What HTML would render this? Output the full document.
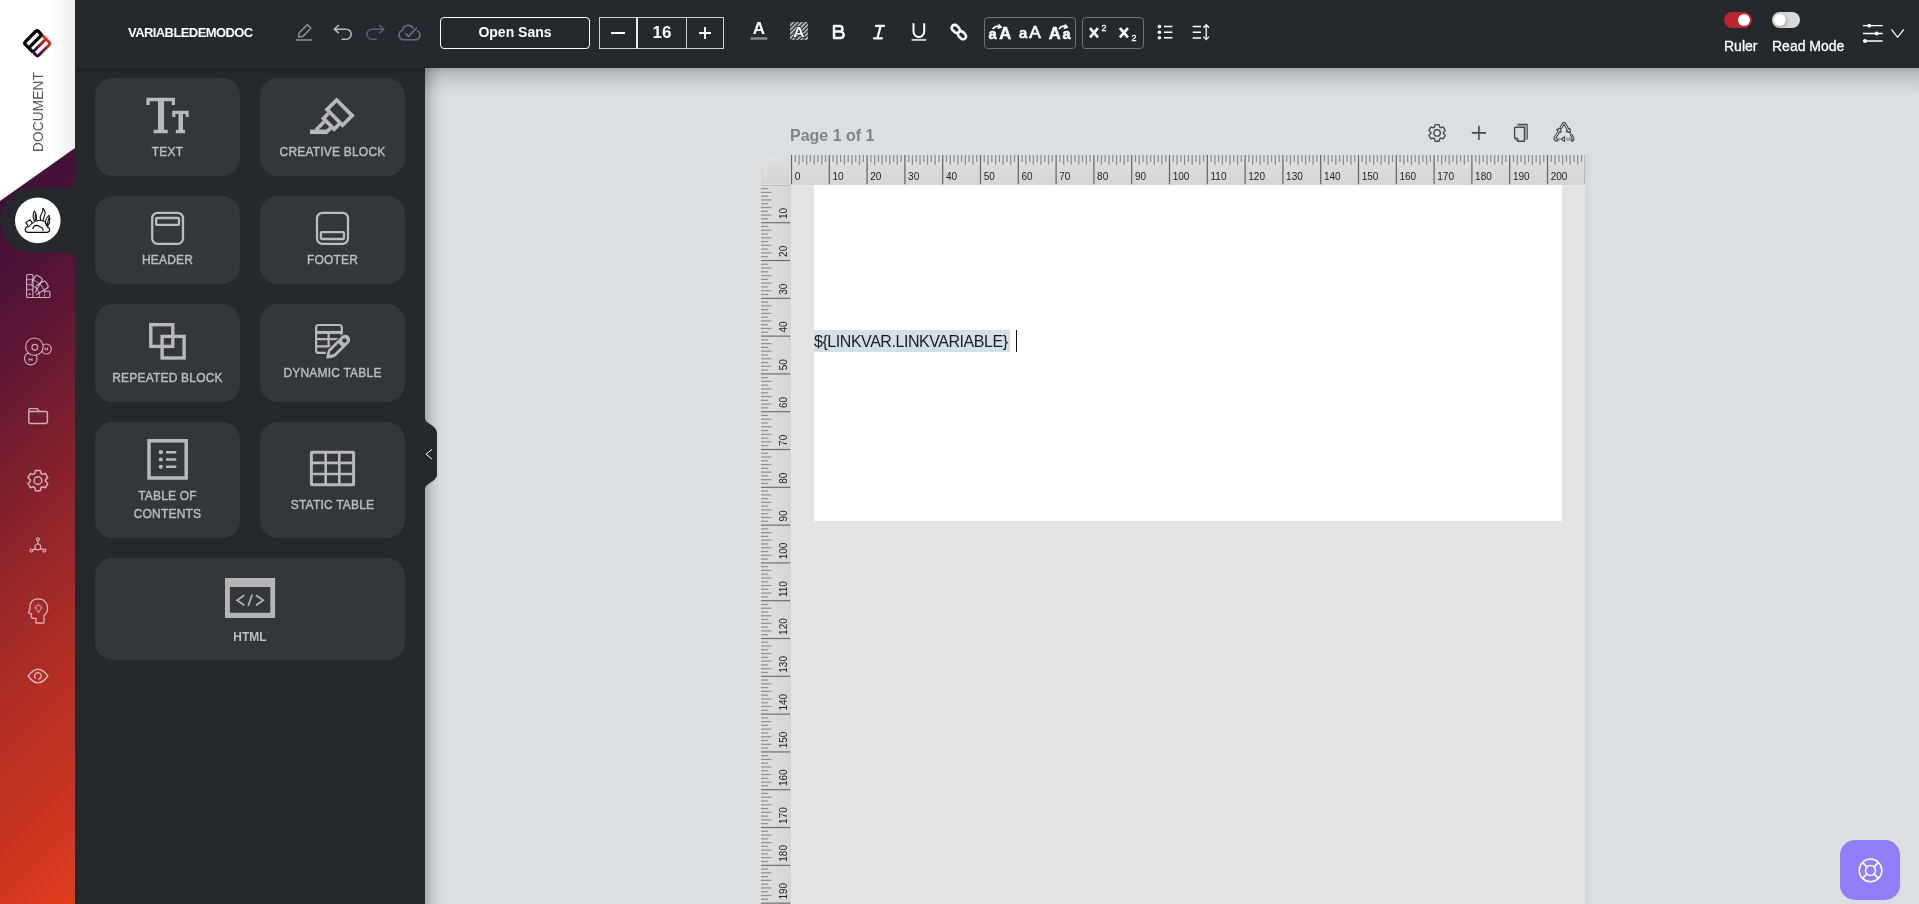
<!DOCTYPE html>
<html>
<head>
<meta charset="utf-8">
<title>Document Editor</title>
<style>
*{box-sizing:border-box;margin:0;padding:0}
html,body{width:1919px;height:904px;overflow:hidden;background:#dcdfe2;font-family:"Liberation Sans",sans-serif;}
.abs{position:absolute}
#canvas{left:425px;top:68px;width:1494px;height:836px;background:#dcdfe2}
#canvas-shadow{left:425px;top:68px;width:20px;height:836px;background:linear-gradient(90deg,rgba(0,0,0,.24),rgba(0,0,0,.09) 40%,rgba(0,0,0,.02) 75%,rgba(0,0,0,0))}
#canvas-topshadow{left:425px;top:68px;width:1494px;height:30px;background:linear-gradient(180deg,rgba(0,0,0,.23),rgba(0,0,0,.13) 25%,rgba(0,0,0,.06) 55%,rgba(0,0,0,.015) 82%,rgba(0,0,0,0))}
#panel{left:75px;top:0;width:350px;height:904px;background:#25282d}
#topbar{left:75px;top:0;width:1844px;height:68px;background:#25282d}
#panel-shadow{left:75px;top:68px;width:350px;height:8px;background:linear-gradient(180deg,rgba(0,0,0,.18),rgba(0,0,0,0))}
#side{left:0;top:0;width:75px;height:904px;background:linear-gradient(135deg,#380e3c 12.3%,#3f0f39 20.1%,#4f1336 30.3%,#5c1634 36.5%,#6b1a31 43.1%,#7b1f2e 49.7%,#8d232c 56.4%,#9b282a 63.0%,#a92b26 69.7%,#b62f24 76.3%,#bf3222 83.5%,#ce3620 90.6%,#d9391e 95.7%,#e03c1d 100.0%)}
.card{position:absolute;background:#33363b;border-radius:18px;color:#bdbdbd;font-size:12px;text-align:center;letter-spacing:.2px;-webkit-text-stroke:.4px #bdbdbd}
.card .lbl{position:absolute;left:0;right:0;text-align:center;line-height:18px}
.card svg{position:absolute}
.tb-txt{color:#fff;font-weight:bold}
.box{position:absolute;border:1px solid #fff;border-radius:4px}
.gbox{position:absolute;border:1px solid #6d7075;border-radius:4px}
#rulerh{left:791px;top:155px;width:794px;height:29.5px;background:linear-gradient(180deg,#e1e1e1,#d5d5d5)}
#rulerc{left:761px;top:155px;width:29px;height:29px;background:linear-gradient(180deg,#dedede,#d4d4d4)}
#rulerv{left:761px;top:185px;width:29.5px;height:719px;background:linear-gradient(90deg,#e0e0e0,#d5d5d5)}
#pagebg{left:791px;top:185px;width:794px;height:719px;background:#e4e4e4}
#page{left:814px;top:185px;width:748px;height:336px;background:#fff}
.rnum{position:absolute;font-size:11px;color:#333;line-height:11px}
</style>
</head>
<body>
<div id="wrap" style="position:absolute;left:0;top:0;width:1919px;height:904px;will-change:transform">
<div id="canvas" class="abs"></div>
<div id="canvas-topshadow" class="abs"></div>
<div id="canvas-shadow" class="abs"></div>

<!-- PAGE AREA -->
<div class="abs" style="left:790px;top:126px;font-size:16px;font-weight:bold;color:#808388;line-height:20px">Page 1 of 1</div>
<div class="abs" style="left:1585px;top:155px;width:7px;height:749px;background:linear-gradient(90deg,rgba(0,0,0,.04),rgba(0,0,0,0))"></div>
<div id="pagebg" class="abs"></div>
<div id="page" class="abs"></div>
<div id="rulerh" class="abs"></div>
<div id="rulerc" class="abs"></div>
<div id="rulerv" class="abs"></div>
<div class="abs" style="left:763px;top:157px;width:20px;height:4px;background:rgba(255,255,255,.13)"></div><div class="abs" style="left:763px;top:161px;width:4px;height:16px;background:rgba(255,255,255,.13)"></div>
<svg class="abs" style="left:0;top:0" width="1919" height="904" viewBox="0 0 1919 904">
<defs><clipPath id="hc"><rect x="791" y="155" width="794" height="29.5"/></clipPath><clipPath id="vc"><rect x="761" y="185" width="29.5" height="719"/></clipPath></defs>
<g clip-path="url(#hc)">
<rect x="790.90" y="155" width="1.2" height="29.5" fill="#636363"/>
<rect x="794.63" y="155" width="1.3" height="7" fill="#8f8f8f"/>
<rect x="798.41" y="155" width="1.3" height="9.7" fill="#8f8f8f"/>
<rect x="802.19" y="155" width="1.3" height="7" fill="#8f8f8f"/>
<rect x="805.97" y="155" width="1.3" height="9.7" fill="#8f8f8f"/>
<rect x="809.75" y="155" width="1.3" height="7" fill="#8f8f8f"/>
<rect x="813.53" y="155" width="1.3" height="9.7" fill="#8f8f8f"/>
<rect x="817.31" y="155" width="1.3" height="7" fill="#8f8f8f"/>
<rect x="821.09" y="155" width="1.3" height="9.7" fill="#8f8f8f"/>
<rect x="824.87" y="155" width="1.3" height="7" fill="#8f8f8f"/>
<rect x="828.70" y="155" width="1.2" height="29.5" fill="#636363"/>
<rect x="832.43" y="155" width="1.3" height="7" fill="#8f8f8f"/>
<rect x="836.21" y="155" width="1.3" height="9.7" fill="#8f8f8f"/>
<rect x="839.99" y="155" width="1.3" height="7" fill="#8f8f8f"/>
<rect x="843.77" y="155" width="1.3" height="9.7" fill="#8f8f8f"/>
<rect x="847.55" y="155" width="1.3" height="7" fill="#8f8f8f"/>
<rect x="851.33" y="155" width="1.3" height="9.7" fill="#8f8f8f"/>
<rect x="855.11" y="155" width="1.3" height="7" fill="#8f8f8f"/>
<rect x="858.89" y="155" width="1.3" height="9.7" fill="#8f8f8f"/>
<rect x="862.67" y="155" width="1.3" height="7" fill="#8f8f8f"/>
<rect x="866.50" y="155" width="1.2" height="29.5" fill="#636363"/>
<rect x="870.23" y="155" width="1.3" height="7" fill="#8f8f8f"/>
<rect x="874.01" y="155" width="1.3" height="9.7" fill="#8f8f8f"/>
<rect x="877.79" y="155" width="1.3" height="7" fill="#8f8f8f"/>
<rect x="881.57" y="155" width="1.3" height="9.7" fill="#8f8f8f"/>
<rect x="885.35" y="155" width="1.3" height="7" fill="#8f8f8f"/>
<rect x="889.13" y="155" width="1.3" height="9.7" fill="#8f8f8f"/>
<rect x="892.91" y="155" width="1.3" height="7" fill="#8f8f8f"/>
<rect x="896.69" y="155" width="1.3" height="9.7" fill="#8f8f8f"/>
<rect x="900.47" y="155" width="1.3" height="7" fill="#8f8f8f"/>
<rect x="904.30" y="155" width="1.2" height="29.5" fill="#636363"/>
<rect x="908.03" y="155" width="1.3" height="7" fill="#8f8f8f"/>
<rect x="911.81" y="155" width="1.3" height="9.7" fill="#8f8f8f"/>
<rect x="915.59" y="155" width="1.3" height="7" fill="#8f8f8f"/>
<rect x="919.37" y="155" width="1.3" height="9.7" fill="#8f8f8f"/>
<rect x="923.15" y="155" width="1.3" height="7" fill="#8f8f8f"/>
<rect x="926.93" y="155" width="1.3" height="9.7" fill="#8f8f8f"/>
<rect x="930.71" y="155" width="1.3" height="7" fill="#8f8f8f"/>
<rect x="934.49" y="155" width="1.3" height="9.7" fill="#8f8f8f"/>
<rect x="938.27" y="155" width="1.3" height="7" fill="#8f8f8f"/>
<rect x="942.10" y="155" width="1.2" height="29.5" fill="#636363"/>
<rect x="945.83" y="155" width="1.3" height="7" fill="#8f8f8f"/>
<rect x="949.61" y="155" width="1.3" height="9.7" fill="#8f8f8f"/>
<rect x="953.39" y="155" width="1.3" height="7" fill="#8f8f8f"/>
<rect x="957.17" y="155" width="1.3" height="9.7" fill="#8f8f8f"/>
<rect x="960.95" y="155" width="1.3" height="7" fill="#8f8f8f"/>
<rect x="964.73" y="155" width="1.3" height="9.7" fill="#8f8f8f"/>
<rect x="968.51" y="155" width="1.3" height="7" fill="#8f8f8f"/>
<rect x="972.29" y="155" width="1.3" height="9.7" fill="#8f8f8f"/>
<rect x="976.07" y="155" width="1.3" height="7" fill="#8f8f8f"/>
<rect x="979.90" y="155" width="1.2" height="29.5" fill="#636363"/>
<rect x="983.63" y="155" width="1.3" height="7" fill="#8f8f8f"/>
<rect x="987.41" y="155" width="1.3" height="9.7" fill="#8f8f8f"/>
<rect x="991.19" y="155" width="1.3" height="7" fill="#8f8f8f"/>
<rect x="994.97" y="155" width="1.3" height="9.7" fill="#8f8f8f"/>
<rect x="998.75" y="155" width="1.3" height="7" fill="#8f8f8f"/>
<rect x="1002.53" y="155" width="1.3" height="9.7" fill="#8f8f8f"/>
<rect x="1006.31" y="155" width="1.3" height="7" fill="#8f8f8f"/>
<rect x="1010.09" y="155" width="1.3" height="9.7" fill="#8f8f8f"/>
<rect x="1013.87" y="155" width="1.3" height="7" fill="#8f8f8f"/>
<rect x="1017.70" y="155" width="1.2" height="29.5" fill="#636363"/>
<rect x="1021.43" y="155" width="1.3" height="7" fill="#8f8f8f"/>
<rect x="1025.21" y="155" width="1.3" height="9.7" fill="#8f8f8f"/>
<rect x="1028.99" y="155" width="1.3" height="7" fill="#8f8f8f"/>
<rect x="1032.77" y="155" width="1.3" height="9.7" fill="#8f8f8f"/>
<rect x="1036.55" y="155" width="1.3" height="7" fill="#8f8f8f"/>
<rect x="1040.33" y="155" width="1.3" height="9.7" fill="#8f8f8f"/>
<rect x="1044.11" y="155" width="1.3" height="7" fill="#8f8f8f"/>
<rect x="1047.89" y="155" width="1.3" height="9.7" fill="#8f8f8f"/>
<rect x="1051.67" y="155" width="1.3" height="7" fill="#8f8f8f"/>
<rect x="1055.50" y="155" width="1.2" height="29.5" fill="#636363"/>
<rect x="1059.23" y="155" width="1.3" height="7" fill="#8f8f8f"/>
<rect x="1063.01" y="155" width="1.3" height="9.7" fill="#8f8f8f"/>
<rect x="1066.79" y="155" width="1.3" height="7" fill="#8f8f8f"/>
<rect x="1070.57" y="155" width="1.3" height="9.7" fill="#8f8f8f"/>
<rect x="1074.35" y="155" width="1.3" height="7" fill="#8f8f8f"/>
<rect x="1078.13" y="155" width="1.3" height="9.7" fill="#8f8f8f"/>
<rect x="1081.91" y="155" width="1.3" height="7" fill="#8f8f8f"/>
<rect x="1085.69" y="155" width="1.3" height="9.7" fill="#8f8f8f"/>
<rect x="1089.47" y="155" width="1.3" height="7" fill="#8f8f8f"/>
<rect x="1093.30" y="155" width="1.2" height="29.5" fill="#636363"/>
<rect x="1097.03" y="155" width="1.3" height="7" fill="#8f8f8f"/>
<rect x="1100.81" y="155" width="1.3" height="9.7" fill="#8f8f8f"/>
<rect x="1104.59" y="155" width="1.3" height="7" fill="#8f8f8f"/>
<rect x="1108.37" y="155" width="1.3" height="9.7" fill="#8f8f8f"/>
<rect x="1112.15" y="155" width="1.3" height="7" fill="#8f8f8f"/>
<rect x="1115.93" y="155" width="1.3" height="9.7" fill="#8f8f8f"/>
<rect x="1119.71" y="155" width="1.3" height="7" fill="#8f8f8f"/>
<rect x="1123.49" y="155" width="1.3" height="9.7" fill="#8f8f8f"/>
<rect x="1127.27" y="155" width="1.3" height="7" fill="#8f8f8f"/>
<rect x="1131.10" y="155" width="1.2" height="29.5" fill="#636363"/>
<rect x="1134.83" y="155" width="1.3" height="7" fill="#8f8f8f"/>
<rect x="1138.61" y="155" width="1.3" height="9.7" fill="#8f8f8f"/>
<rect x="1142.39" y="155" width="1.3" height="7" fill="#8f8f8f"/>
<rect x="1146.17" y="155" width="1.3" height="9.7" fill="#8f8f8f"/>
<rect x="1149.95" y="155" width="1.3" height="7" fill="#8f8f8f"/>
<rect x="1153.73" y="155" width="1.3" height="9.7" fill="#8f8f8f"/>
<rect x="1157.51" y="155" width="1.3" height="7" fill="#8f8f8f"/>
<rect x="1161.29" y="155" width="1.3" height="9.7" fill="#8f8f8f"/>
<rect x="1165.07" y="155" width="1.3" height="7" fill="#8f8f8f"/>
<rect x="1168.90" y="155" width="1.2" height="29.5" fill="#636363"/>
<rect x="1172.63" y="155" width="1.3" height="7" fill="#8f8f8f"/>
<rect x="1176.41" y="155" width="1.3" height="9.7" fill="#8f8f8f"/>
<rect x="1180.19" y="155" width="1.3" height="7" fill="#8f8f8f"/>
<rect x="1183.97" y="155" width="1.3" height="9.7" fill="#8f8f8f"/>
<rect x="1187.75" y="155" width="1.3" height="7" fill="#8f8f8f"/>
<rect x="1191.53" y="155" width="1.3" height="9.7" fill="#8f8f8f"/>
<rect x="1195.31" y="155" width="1.3" height="7" fill="#8f8f8f"/>
<rect x="1199.09" y="155" width="1.3" height="9.7" fill="#8f8f8f"/>
<rect x="1202.87" y="155" width="1.3" height="7" fill="#8f8f8f"/>
<rect x="1206.70" y="155" width="1.2" height="29.5" fill="#636363"/>
<rect x="1210.43" y="155" width="1.3" height="7" fill="#8f8f8f"/>
<rect x="1214.21" y="155" width="1.3" height="9.7" fill="#8f8f8f"/>
<rect x="1217.99" y="155" width="1.3" height="7" fill="#8f8f8f"/>
<rect x="1221.77" y="155" width="1.3" height="9.7" fill="#8f8f8f"/>
<rect x="1225.55" y="155" width="1.3" height="7" fill="#8f8f8f"/>
<rect x="1229.33" y="155" width="1.3" height="9.7" fill="#8f8f8f"/>
<rect x="1233.11" y="155" width="1.3" height="7" fill="#8f8f8f"/>
<rect x="1236.89" y="155" width="1.3" height="9.7" fill="#8f8f8f"/>
<rect x="1240.67" y="155" width="1.3" height="7" fill="#8f8f8f"/>
<rect x="1244.50" y="155" width="1.2" height="29.5" fill="#636363"/>
<rect x="1248.23" y="155" width="1.3" height="7" fill="#8f8f8f"/>
<rect x="1252.01" y="155" width="1.3" height="9.7" fill="#8f8f8f"/>
<rect x="1255.79" y="155" width="1.3" height="7" fill="#8f8f8f"/>
<rect x="1259.57" y="155" width="1.3" height="9.7" fill="#8f8f8f"/>
<rect x="1263.35" y="155" width="1.3" height="7" fill="#8f8f8f"/>
<rect x="1267.13" y="155" width="1.3" height="9.7" fill="#8f8f8f"/>
<rect x="1270.91" y="155" width="1.3" height="7" fill="#8f8f8f"/>
<rect x="1274.69" y="155" width="1.3" height="9.7" fill="#8f8f8f"/>
<rect x="1278.47" y="155" width="1.3" height="7" fill="#8f8f8f"/>
<rect x="1282.30" y="155" width="1.2" height="29.5" fill="#636363"/>
<rect x="1286.03" y="155" width="1.3" height="7" fill="#8f8f8f"/>
<rect x="1289.81" y="155" width="1.3" height="9.7" fill="#8f8f8f"/>
<rect x="1293.59" y="155" width="1.3" height="7" fill="#8f8f8f"/>
<rect x="1297.37" y="155" width="1.3" height="9.7" fill="#8f8f8f"/>
<rect x="1301.15" y="155" width="1.3" height="7" fill="#8f8f8f"/>
<rect x="1304.93" y="155" width="1.3" height="9.7" fill="#8f8f8f"/>
<rect x="1308.71" y="155" width="1.3" height="7" fill="#8f8f8f"/>
<rect x="1312.49" y="155" width="1.3" height="9.7" fill="#8f8f8f"/>
<rect x="1316.27" y="155" width="1.3" height="7" fill="#8f8f8f"/>
<rect x="1320.10" y="155" width="1.2" height="29.5" fill="#636363"/>
<rect x="1323.83" y="155" width="1.3" height="7" fill="#8f8f8f"/>
<rect x="1327.61" y="155" width="1.3" height="9.7" fill="#8f8f8f"/>
<rect x="1331.39" y="155" width="1.3" height="7" fill="#8f8f8f"/>
<rect x="1335.17" y="155" width="1.3" height="9.7" fill="#8f8f8f"/>
<rect x="1338.95" y="155" width="1.3" height="7" fill="#8f8f8f"/>
<rect x="1342.73" y="155" width="1.3" height="9.7" fill="#8f8f8f"/>
<rect x="1346.51" y="155" width="1.3" height="7" fill="#8f8f8f"/>
<rect x="1350.29" y="155" width="1.3" height="9.7" fill="#8f8f8f"/>
<rect x="1354.07" y="155" width="1.3" height="7" fill="#8f8f8f"/>
<rect x="1357.90" y="155" width="1.2" height="29.5" fill="#636363"/>
<rect x="1361.63" y="155" width="1.3" height="7" fill="#8f8f8f"/>
<rect x="1365.41" y="155" width="1.3" height="9.7" fill="#8f8f8f"/>
<rect x="1369.19" y="155" width="1.3" height="7" fill="#8f8f8f"/>
<rect x="1372.97" y="155" width="1.3" height="9.7" fill="#8f8f8f"/>
<rect x="1376.75" y="155" width="1.3" height="7" fill="#8f8f8f"/>
<rect x="1380.53" y="155" width="1.3" height="9.7" fill="#8f8f8f"/>
<rect x="1384.31" y="155" width="1.3" height="7" fill="#8f8f8f"/>
<rect x="1388.09" y="155" width="1.3" height="9.7" fill="#8f8f8f"/>
<rect x="1391.87" y="155" width="1.3" height="7" fill="#8f8f8f"/>
<rect x="1395.70" y="155" width="1.2" height="29.5" fill="#636363"/>
<rect x="1399.43" y="155" width="1.3" height="7" fill="#8f8f8f"/>
<rect x="1403.21" y="155" width="1.3" height="9.7" fill="#8f8f8f"/>
<rect x="1406.99" y="155" width="1.3" height="7" fill="#8f8f8f"/>
<rect x="1410.77" y="155" width="1.3" height="9.7" fill="#8f8f8f"/>
<rect x="1414.55" y="155" width="1.3" height="7" fill="#8f8f8f"/>
<rect x="1418.33" y="155" width="1.3" height="9.7" fill="#8f8f8f"/>
<rect x="1422.11" y="155" width="1.3" height="7" fill="#8f8f8f"/>
<rect x="1425.89" y="155" width="1.3" height="9.7" fill="#8f8f8f"/>
<rect x="1429.67" y="155" width="1.3" height="7" fill="#8f8f8f"/>
<rect x="1433.50" y="155" width="1.2" height="29.5" fill="#636363"/>
<rect x="1437.23" y="155" width="1.3" height="7" fill="#8f8f8f"/>
<rect x="1441.01" y="155" width="1.3" height="9.7" fill="#8f8f8f"/>
<rect x="1444.79" y="155" width="1.3" height="7" fill="#8f8f8f"/>
<rect x="1448.57" y="155" width="1.3" height="9.7" fill="#8f8f8f"/>
<rect x="1452.35" y="155" width="1.3" height="7" fill="#8f8f8f"/>
<rect x="1456.13" y="155" width="1.3" height="9.7" fill="#8f8f8f"/>
<rect x="1459.91" y="155" width="1.3" height="7" fill="#8f8f8f"/>
<rect x="1463.69" y="155" width="1.3" height="9.7" fill="#8f8f8f"/>
<rect x="1467.47" y="155" width="1.3" height="7" fill="#8f8f8f"/>
<rect x="1471.30" y="155" width="1.2" height="29.5" fill="#636363"/>
<rect x="1475.03" y="155" width="1.3" height="7" fill="#8f8f8f"/>
<rect x="1478.81" y="155" width="1.3" height="9.7" fill="#8f8f8f"/>
<rect x="1482.59" y="155" width="1.3" height="7" fill="#8f8f8f"/>
<rect x="1486.37" y="155" width="1.3" height="9.7" fill="#8f8f8f"/>
<rect x="1490.15" y="155" width="1.3" height="7" fill="#8f8f8f"/>
<rect x="1493.93" y="155" width="1.3" height="9.7" fill="#8f8f8f"/>
<rect x="1497.71" y="155" width="1.3" height="7" fill="#8f8f8f"/>
<rect x="1501.49" y="155" width="1.3" height="9.7" fill="#8f8f8f"/>
<rect x="1505.27" y="155" width="1.3" height="7" fill="#8f8f8f"/>
<rect x="1509.10" y="155" width="1.2" height="29.5" fill="#636363"/>
<rect x="1512.83" y="155" width="1.3" height="7" fill="#8f8f8f"/>
<rect x="1516.61" y="155" width="1.3" height="9.7" fill="#8f8f8f"/>
<rect x="1520.39" y="155" width="1.3" height="7" fill="#8f8f8f"/>
<rect x="1524.17" y="155" width="1.3" height="9.7" fill="#8f8f8f"/>
<rect x="1527.95" y="155" width="1.3" height="7" fill="#8f8f8f"/>
<rect x="1531.73" y="155" width="1.3" height="9.7" fill="#8f8f8f"/>
<rect x="1535.51" y="155" width="1.3" height="7" fill="#8f8f8f"/>
<rect x="1539.29" y="155" width="1.3" height="9.7" fill="#8f8f8f"/>
<rect x="1543.07" y="155" width="1.3" height="7" fill="#8f8f8f"/>
<rect x="1546.90" y="155" width="1.2" height="29.5" fill="#636363"/>
<rect x="1550.63" y="155" width="1.3" height="7" fill="#8f8f8f"/>
<rect x="1554.41" y="155" width="1.3" height="9.7" fill="#8f8f8f"/>
<rect x="1558.19" y="155" width="1.3" height="7" fill="#8f8f8f"/>
<rect x="1561.97" y="155" width="1.3" height="9.7" fill="#8f8f8f"/>
<rect x="1565.75" y="155" width="1.3" height="7" fill="#8f8f8f"/>
<rect x="1569.53" y="155" width="1.3" height="9.7" fill="#8f8f8f"/>
<rect x="1573.31" y="155" width="1.3" height="7" fill="#8f8f8f"/>
<rect x="1577.09" y="155" width="1.3" height="9.7" fill="#8f8f8f"/>
<rect x="1580.87" y="155" width="1.3" height="7" fill="#8f8f8f"/>
<rect x="1584.70" y="155" width="1.2" height="29.5" fill="#636363"/>
<rect x="1588.43" y="155" width="1.3" height="7" fill="#8f8f8f"/>
<text x="794.70" y="180" font-family="Liberation Sans, sans-serif" font-size="10" fill="#222">0</text>
<text x="832.50" y="180" font-family="Liberation Sans, sans-serif" font-size="10" fill="#222">10</text>
<text x="870.30" y="180" font-family="Liberation Sans, sans-serif" font-size="10" fill="#222">20</text>
<text x="908.10" y="180" font-family="Liberation Sans, sans-serif" font-size="10" fill="#222">30</text>
<text x="945.90" y="180" font-family="Liberation Sans, sans-serif" font-size="10" fill="#222">40</text>
<text x="983.70" y="180" font-family="Liberation Sans, sans-serif" font-size="10" fill="#222">50</text>
<text x="1021.50" y="180" font-family="Liberation Sans, sans-serif" font-size="10" fill="#222">60</text>
<text x="1059.30" y="180" font-family="Liberation Sans, sans-serif" font-size="10" fill="#222">70</text>
<text x="1097.10" y="180" font-family="Liberation Sans, sans-serif" font-size="10" fill="#222">80</text>
<text x="1134.90" y="180" font-family="Liberation Sans, sans-serif" font-size="10" fill="#222">90</text>
<text x="1172.70" y="180" font-family="Liberation Sans, sans-serif" font-size="10" fill="#222">100</text>
<text x="1210.50" y="180" font-family="Liberation Sans, sans-serif" font-size="10" fill="#222">110</text>
<text x="1248.30" y="180" font-family="Liberation Sans, sans-serif" font-size="10" fill="#222">120</text>
<text x="1286.10" y="180" font-family="Liberation Sans, sans-serif" font-size="10" fill="#222">130</text>
<text x="1323.90" y="180" font-family="Liberation Sans, sans-serif" font-size="10" fill="#222">140</text>
<text x="1361.70" y="180" font-family="Liberation Sans, sans-serif" font-size="10" fill="#222">150</text>
<text x="1399.50" y="180" font-family="Liberation Sans, sans-serif" font-size="10" fill="#222">160</text>
<text x="1437.30" y="180" font-family="Liberation Sans, sans-serif" font-size="10" fill="#222">170</text>
<text x="1475.10" y="180" font-family="Liberation Sans, sans-serif" font-size="10" fill="#222">180</text>
<text x="1512.90" y="180" font-family="Liberation Sans, sans-serif" font-size="10" fill="#222">190</text>
<text x="1550.70" y="180" font-family="Liberation Sans, sans-serif" font-size="10" fill="#222">200</text>
</g>
<g clip-path="url(#vc)">
<rect x="761" y="184.35" width="29.5" height="1.15" fill="#9a9a9a"/>
<rect x="761" y="188.03" width="7.2" height="1.2" fill="#909090"/>
<rect x="761" y="191.81" width="10.3" height="1.2" fill="#909090"/>
<rect x="761" y="195.59" width="7.2" height="1.2" fill="#909090"/>
<rect x="761" y="199.37" width="10.3" height="1.2" fill="#909090"/>
<rect x="761" y="203.15" width="7.2" height="1.2" fill="#909090"/>
<rect x="761" y="206.93" width="10.3" height="1.2" fill="#909090"/>
<rect x="761" y="210.71" width="7.2" height="1.2" fill="#909090"/>
<rect x="761" y="214.49" width="10.3" height="1.2" fill="#909090"/>
<rect x="761" y="218.27" width="7.2" height="1.2" fill="#909090"/>
<rect x="761" y="222.15" width="29.5" height="1.15" fill="#6a6a6a"/>
<rect x="761" y="225.83" width="7.2" height="1.2" fill="#909090"/>
<rect x="761" y="229.61" width="10.3" height="1.2" fill="#909090"/>
<rect x="761" y="233.39" width="7.2" height="1.2" fill="#909090"/>
<rect x="761" y="237.17" width="10.3" height="1.2" fill="#909090"/>
<rect x="761" y="240.95" width="7.2" height="1.2" fill="#909090"/>
<rect x="761" y="244.73" width="10.3" height="1.2" fill="#909090"/>
<rect x="761" y="248.51" width="7.2" height="1.2" fill="#909090"/>
<rect x="761" y="252.29" width="10.3" height="1.2" fill="#909090"/>
<rect x="761" y="256.07" width="7.2" height="1.2" fill="#909090"/>
<rect x="761" y="259.95" width="29.5" height="1.15" fill="#6a6a6a"/>
<rect x="761" y="263.63" width="7.2" height="1.2" fill="#909090"/>
<rect x="761" y="267.41" width="10.3" height="1.2" fill="#909090"/>
<rect x="761" y="271.19" width="7.2" height="1.2" fill="#909090"/>
<rect x="761" y="274.97" width="10.3" height="1.2" fill="#909090"/>
<rect x="761" y="278.75" width="7.2" height="1.2" fill="#909090"/>
<rect x="761" y="282.53" width="10.3" height="1.2" fill="#909090"/>
<rect x="761" y="286.31" width="7.2" height="1.2" fill="#909090"/>
<rect x="761" y="290.09" width="10.3" height="1.2" fill="#909090"/>
<rect x="761" y="293.87" width="7.2" height="1.2" fill="#909090"/>
<rect x="761" y="297.75" width="29.5" height="1.15" fill="#6a6a6a"/>
<rect x="761" y="301.43" width="7.2" height="1.2" fill="#909090"/>
<rect x="761" y="305.21" width="10.3" height="1.2" fill="#909090"/>
<rect x="761" y="308.99" width="7.2" height="1.2" fill="#909090"/>
<rect x="761" y="312.77" width="10.3" height="1.2" fill="#909090"/>
<rect x="761" y="316.55" width="7.2" height="1.2" fill="#909090"/>
<rect x="761" y="320.33" width="10.3" height="1.2" fill="#909090"/>
<rect x="761" y="324.11" width="7.2" height="1.2" fill="#909090"/>
<rect x="761" y="327.89" width="10.3" height="1.2" fill="#909090"/>
<rect x="761" y="331.67" width="7.2" height="1.2" fill="#909090"/>
<rect x="761" y="335.55" width="29.5" height="1.15" fill="#6a6a6a"/>
<rect x="761" y="339.23" width="7.2" height="1.2" fill="#909090"/>
<rect x="761" y="343.01" width="10.3" height="1.2" fill="#909090"/>
<rect x="761" y="346.79" width="7.2" height="1.2" fill="#909090"/>
<rect x="761" y="350.57" width="10.3" height="1.2" fill="#909090"/>
<rect x="761" y="354.35" width="7.2" height="1.2" fill="#909090"/>
<rect x="761" y="358.13" width="10.3" height="1.2" fill="#909090"/>
<rect x="761" y="361.91" width="7.2" height="1.2" fill="#909090"/>
<rect x="761" y="365.69" width="10.3" height="1.2" fill="#909090"/>
<rect x="761" y="369.47" width="7.2" height="1.2" fill="#909090"/>
<rect x="761" y="373.35" width="29.5" height="1.15" fill="#6a6a6a"/>
<rect x="761" y="377.03" width="7.2" height="1.2" fill="#909090"/>
<rect x="761" y="380.81" width="10.3" height="1.2" fill="#909090"/>
<rect x="761" y="384.59" width="7.2" height="1.2" fill="#909090"/>
<rect x="761" y="388.37" width="10.3" height="1.2" fill="#909090"/>
<rect x="761" y="392.15" width="7.2" height="1.2" fill="#909090"/>
<rect x="761" y="395.93" width="10.3" height="1.2" fill="#909090"/>
<rect x="761" y="399.71" width="7.2" height="1.2" fill="#909090"/>
<rect x="761" y="403.49" width="10.3" height="1.2" fill="#909090"/>
<rect x="761" y="407.27" width="7.2" height="1.2" fill="#909090"/>
<rect x="761" y="411.15" width="29.5" height="1.15" fill="#6a6a6a"/>
<rect x="761" y="414.83" width="7.2" height="1.2" fill="#909090"/>
<rect x="761" y="418.61" width="10.3" height="1.2" fill="#909090"/>
<rect x="761" y="422.39" width="7.2" height="1.2" fill="#909090"/>
<rect x="761" y="426.17" width="10.3" height="1.2" fill="#909090"/>
<rect x="761" y="429.95" width="7.2" height="1.2" fill="#909090"/>
<rect x="761" y="433.73" width="10.3" height="1.2" fill="#909090"/>
<rect x="761" y="437.51" width="7.2" height="1.2" fill="#909090"/>
<rect x="761" y="441.29" width="10.3" height="1.2" fill="#909090"/>
<rect x="761" y="445.07" width="7.2" height="1.2" fill="#909090"/>
<rect x="761" y="448.95" width="29.5" height="1.15" fill="#6a6a6a"/>
<rect x="761" y="452.63" width="7.2" height="1.2" fill="#909090"/>
<rect x="761" y="456.41" width="10.3" height="1.2" fill="#909090"/>
<rect x="761" y="460.19" width="7.2" height="1.2" fill="#909090"/>
<rect x="761" y="463.97" width="10.3" height="1.2" fill="#909090"/>
<rect x="761" y="467.75" width="7.2" height="1.2" fill="#909090"/>
<rect x="761" y="471.53" width="10.3" height="1.2" fill="#909090"/>
<rect x="761" y="475.31" width="7.2" height="1.2" fill="#909090"/>
<rect x="761" y="479.09" width="10.3" height="1.2" fill="#909090"/>
<rect x="761" y="482.87" width="7.2" height="1.2" fill="#909090"/>
<rect x="761" y="486.75" width="29.5" height="1.15" fill="#6a6a6a"/>
<rect x="761" y="490.43" width="7.2" height="1.2" fill="#909090"/>
<rect x="761" y="494.21" width="10.3" height="1.2" fill="#909090"/>
<rect x="761" y="497.99" width="7.2" height="1.2" fill="#909090"/>
<rect x="761" y="501.77" width="10.3" height="1.2" fill="#909090"/>
<rect x="761" y="505.55" width="7.2" height="1.2" fill="#909090"/>
<rect x="761" y="509.33" width="10.3" height="1.2" fill="#909090"/>
<rect x="761" y="513.11" width="7.2" height="1.2" fill="#909090"/>
<rect x="761" y="516.89" width="10.3" height="1.2" fill="#909090"/>
<rect x="761" y="520.67" width="7.2" height="1.2" fill="#909090"/>
<rect x="761" y="524.55" width="29.5" height="1.15" fill="#6a6a6a"/>
<rect x="761" y="528.23" width="7.2" height="1.2" fill="#909090"/>
<rect x="761" y="532.01" width="10.3" height="1.2" fill="#909090"/>
<rect x="761" y="535.79" width="7.2" height="1.2" fill="#909090"/>
<rect x="761" y="539.57" width="10.3" height="1.2" fill="#909090"/>
<rect x="761" y="543.35" width="7.2" height="1.2" fill="#909090"/>
<rect x="761" y="547.13" width="10.3" height="1.2" fill="#909090"/>
<rect x="761" y="550.91" width="7.2" height="1.2" fill="#909090"/>
<rect x="761" y="554.69" width="10.3" height="1.2" fill="#909090"/>
<rect x="761" y="558.47" width="7.2" height="1.2" fill="#909090"/>
<rect x="761" y="562.35" width="29.5" height="1.15" fill="#6a6a6a"/>
<rect x="761" y="566.03" width="7.2" height="1.2" fill="#909090"/>
<rect x="761" y="569.81" width="10.3" height="1.2" fill="#909090"/>
<rect x="761" y="573.59" width="7.2" height="1.2" fill="#909090"/>
<rect x="761" y="577.37" width="10.3" height="1.2" fill="#909090"/>
<rect x="761" y="581.15" width="7.2" height="1.2" fill="#909090"/>
<rect x="761" y="584.93" width="10.3" height="1.2" fill="#909090"/>
<rect x="761" y="588.71" width="7.2" height="1.2" fill="#909090"/>
<rect x="761" y="592.49" width="10.3" height="1.2" fill="#909090"/>
<rect x="761" y="596.27" width="7.2" height="1.2" fill="#909090"/>
<rect x="761" y="600.15" width="29.5" height="1.15" fill="#6a6a6a"/>
<rect x="761" y="603.83" width="7.2" height="1.2" fill="#909090"/>
<rect x="761" y="607.61" width="10.3" height="1.2" fill="#909090"/>
<rect x="761" y="611.39" width="7.2" height="1.2" fill="#909090"/>
<rect x="761" y="615.17" width="10.3" height="1.2" fill="#909090"/>
<rect x="761" y="618.95" width="7.2" height="1.2" fill="#909090"/>
<rect x="761" y="622.73" width="10.3" height="1.2" fill="#909090"/>
<rect x="761" y="626.51" width="7.2" height="1.2" fill="#909090"/>
<rect x="761" y="630.29" width="10.3" height="1.2" fill="#909090"/>
<rect x="761" y="634.07" width="7.2" height="1.2" fill="#909090"/>
<rect x="761" y="637.95" width="29.5" height="1.15" fill="#6a6a6a"/>
<rect x="761" y="641.63" width="7.2" height="1.2" fill="#909090"/>
<rect x="761" y="645.41" width="10.3" height="1.2" fill="#909090"/>
<rect x="761" y="649.19" width="7.2" height="1.2" fill="#909090"/>
<rect x="761" y="652.97" width="10.3" height="1.2" fill="#909090"/>
<rect x="761" y="656.75" width="7.2" height="1.2" fill="#909090"/>
<rect x="761" y="660.53" width="10.3" height="1.2" fill="#909090"/>
<rect x="761" y="664.31" width="7.2" height="1.2" fill="#909090"/>
<rect x="761" y="668.09" width="10.3" height="1.2" fill="#909090"/>
<rect x="761" y="671.87" width="7.2" height="1.2" fill="#909090"/>
<rect x="761" y="675.75" width="29.5" height="1.15" fill="#6a6a6a"/>
<rect x="761" y="679.43" width="7.2" height="1.2" fill="#909090"/>
<rect x="761" y="683.21" width="10.3" height="1.2" fill="#909090"/>
<rect x="761" y="686.99" width="7.2" height="1.2" fill="#909090"/>
<rect x="761" y="690.77" width="10.3" height="1.2" fill="#909090"/>
<rect x="761" y="694.55" width="7.2" height="1.2" fill="#909090"/>
<rect x="761" y="698.33" width="10.3" height="1.2" fill="#909090"/>
<rect x="761" y="702.11" width="7.2" height="1.2" fill="#909090"/>
<rect x="761" y="705.89" width="10.3" height="1.2" fill="#909090"/>
<rect x="761" y="709.67" width="7.2" height="1.2" fill="#909090"/>
<rect x="761" y="713.55" width="29.5" height="1.15" fill="#6a6a6a"/>
<rect x="761" y="717.23" width="7.2" height="1.2" fill="#909090"/>
<rect x="761" y="721.01" width="10.3" height="1.2" fill="#909090"/>
<rect x="761" y="724.79" width="7.2" height="1.2" fill="#909090"/>
<rect x="761" y="728.57" width="10.3" height="1.2" fill="#909090"/>
<rect x="761" y="732.35" width="7.2" height="1.2" fill="#909090"/>
<rect x="761" y="736.13" width="10.3" height="1.2" fill="#909090"/>
<rect x="761" y="739.91" width="7.2" height="1.2" fill="#909090"/>
<rect x="761" y="743.69" width="10.3" height="1.2" fill="#909090"/>
<rect x="761" y="747.47" width="7.2" height="1.2" fill="#909090"/>
<rect x="761" y="751.35" width="29.5" height="1.15" fill="#6a6a6a"/>
<rect x="761" y="755.03" width="7.2" height="1.2" fill="#909090"/>
<rect x="761" y="758.81" width="10.3" height="1.2" fill="#909090"/>
<rect x="761" y="762.59" width="7.2" height="1.2" fill="#909090"/>
<rect x="761" y="766.37" width="10.3" height="1.2" fill="#909090"/>
<rect x="761" y="770.15" width="7.2" height="1.2" fill="#909090"/>
<rect x="761" y="773.93" width="10.3" height="1.2" fill="#909090"/>
<rect x="761" y="777.71" width="7.2" height="1.2" fill="#909090"/>
<rect x="761" y="781.49" width="10.3" height="1.2" fill="#909090"/>
<rect x="761" y="785.27" width="7.2" height="1.2" fill="#909090"/>
<rect x="761" y="789.15" width="29.5" height="1.15" fill="#6a6a6a"/>
<rect x="761" y="792.83" width="7.2" height="1.2" fill="#909090"/>
<rect x="761" y="796.61" width="10.3" height="1.2" fill="#909090"/>
<rect x="761" y="800.39" width="7.2" height="1.2" fill="#909090"/>
<rect x="761" y="804.17" width="10.3" height="1.2" fill="#909090"/>
<rect x="761" y="807.95" width="7.2" height="1.2" fill="#909090"/>
<rect x="761" y="811.73" width="10.3" height="1.2" fill="#909090"/>
<rect x="761" y="815.51" width="7.2" height="1.2" fill="#909090"/>
<rect x="761" y="819.29" width="10.3" height="1.2" fill="#909090"/>
<rect x="761" y="823.07" width="7.2" height="1.2" fill="#909090"/>
<rect x="761" y="826.95" width="29.5" height="1.15" fill="#6a6a6a"/>
<rect x="761" y="830.63" width="7.2" height="1.2" fill="#909090"/>
<rect x="761" y="834.41" width="10.3" height="1.2" fill="#909090"/>
<rect x="761" y="838.19" width="7.2" height="1.2" fill="#909090"/>
<rect x="761" y="841.97" width="10.3" height="1.2" fill="#909090"/>
<rect x="761" y="845.75" width="7.2" height="1.2" fill="#909090"/>
<rect x="761" y="849.53" width="10.3" height="1.2" fill="#909090"/>
<rect x="761" y="853.31" width="7.2" height="1.2" fill="#909090"/>
<rect x="761" y="857.09" width="10.3" height="1.2" fill="#909090"/>
<rect x="761" y="860.87" width="7.2" height="1.2" fill="#909090"/>
<rect x="761" y="864.75" width="29.5" height="1.15" fill="#6a6a6a"/>
<rect x="761" y="868.43" width="7.2" height="1.2" fill="#909090"/>
<rect x="761" y="872.21" width="10.3" height="1.2" fill="#909090"/>
<rect x="761" y="875.99" width="7.2" height="1.2" fill="#909090"/>
<rect x="761" y="879.77" width="10.3" height="1.2" fill="#909090"/>
<rect x="761" y="883.55" width="7.2" height="1.2" fill="#909090"/>
<rect x="761" y="887.33" width="10.3" height="1.2" fill="#909090"/>
<rect x="761" y="891.11" width="7.2" height="1.2" fill="#909090"/>
<rect x="761" y="894.89" width="10.3" height="1.2" fill="#909090"/>
<rect x="761" y="898.67" width="7.2" height="1.2" fill="#909090"/>
<rect x="761" y="902.55" width="29.5" height="1.15" fill="#6a6a6a"/>
<rect x="761" y="906.23" width="7.2" height="1.2" fill="#909090"/>
<text transform="translate(786.8,219.10) rotate(-90)" font-family="Liberation Sans, sans-serif" font-size="10" fill="#222">10</text>
<text transform="translate(786.8,256.90) rotate(-90)" font-family="Liberation Sans, sans-serif" font-size="10" fill="#222">20</text>
<text transform="translate(786.8,294.70) rotate(-90)" font-family="Liberation Sans, sans-serif" font-size="10" fill="#222">30</text>
<text transform="translate(786.8,332.50) rotate(-90)" font-family="Liberation Sans, sans-serif" font-size="10" fill="#222">40</text>
<text transform="translate(786.8,370.30) rotate(-90)" font-family="Liberation Sans, sans-serif" font-size="10" fill="#222">50</text>
<text transform="translate(786.8,408.10) rotate(-90)" font-family="Liberation Sans, sans-serif" font-size="10" fill="#222">60</text>
<text transform="translate(786.8,445.90) rotate(-90)" font-family="Liberation Sans, sans-serif" font-size="10" fill="#222">70</text>
<text transform="translate(786.8,483.70) rotate(-90)" font-family="Liberation Sans, sans-serif" font-size="10" fill="#222">80</text>
<text transform="translate(786.8,521.50) rotate(-90)" font-family="Liberation Sans, sans-serif" font-size="10" fill="#222">90</text>
<text transform="translate(786.8,559.30) rotate(-90)" font-family="Liberation Sans, sans-serif" font-size="10" fill="#222">100</text>
<text transform="translate(786.8,597.10) rotate(-90)" font-family="Liberation Sans, sans-serif" font-size="10" fill="#222">110</text>
<text transform="translate(786.8,634.90) rotate(-90)" font-family="Liberation Sans, sans-serif" font-size="10" fill="#222">120</text>
<text transform="translate(786.8,672.70) rotate(-90)" font-family="Liberation Sans, sans-serif" font-size="10" fill="#222">130</text>
<text transform="translate(786.8,710.50) rotate(-90)" font-family="Liberation Sans, sans-serif" font-size="10" fill="#222">140</text>
<text transform="translate(786.8,748.30) rotate(-90)" font-family="Liberation Sans, sans-serif" font-size="10" fill="#222">150</text>
<text transform="translate(786.8,786.10) rotate(-90)" font-family="Liberation Sans, sans-serif" font-size="10" fill="#222">160</text>
<text transform="translate(786.8,823.90) rotate(-90)" font-family="Liberation Sans, sans-serif" font-size="10" fill="#222">170</text>
<text transform="translate(786.8,861.70) rotate(-90)" font-family="Liberation Sans, sans-serif" font-size="10" fill="#222">180</text>
<text transform="translate(786.8,899.50) rotate(-90)" font-family="Liberation Sans, sans-serif" font-size="10" fill="#222">190</text>
</g>
</svg>
<svg class="abs" style="left:1420px;top:115px" width="170" height="36" viewBox="1420 115 170 36">
<g fill="none" stroke="#474c52" stroke-width="1.4" stroke-linejoin="round">
<path d="M1434.42,127.20 L1435.16,124.62 L1439.04,124.62 L1439.78,127.20 L1440.70,127.73 L1443.30,127.08 L1445.24,130.44 L1443.38,132.37 L1443.38,133.43 L1445.24,135.36 L1443.30,138.72 L1440.70,138.07 L1439.78,138.60 L1439.04,141.18 L1435.16,141.18 L1434.42,138.60 L1433.50,138.07 L1430.90,138.72 L1428.96,135.36 L1430.82,133.43 L1430.82,132.37 L1428.96,130.44 L1430.90,127.08 L1433.50,127.73Z"/>
<circle cx="1437.1" cy="132.9" r="3.2"/>
<path d="M1471.8,132.9H1486M1478.9,125.8V140" stroke-width="1.6"/>
<!-- copy -->
<path d="M1517.6,124.4 H1527.2 V139.4" stroke-width="1.2"/>
<path d="M1516.4,126 H1526 V140" stroke="#8b8f93" stroke-width="1.4"/>
<path d="M1514.6,127.4 H1524.4 V141.2 H1518 L1514.6,138 Z" fill="#dcdfe2"/>
<path d="M1514.6,138 H1518 V141.2" stroke-width="1"/>
</g>
<!-- recycle -->
<path d="M1556.6,137.8 H1560 V141 H1556.6 Z M1566,137.4 H1572 V140.8 H1566 Z" fill="#a2a2a2"/>
<g fill="none" stroke="#3d4247" stroke-linejoin="round" stroke-linecap="round">
<path d="M1561,127.6 L1563.4,123.6 Q1564,122.6 1564.7,123.6 L1568.2,129.8" stroke-width="2.9"/>
<path d="M1556.8,140.2 Q1554,139.8 1555.2,137.4 L1559.4,130.4" stroke-width="2.9"/>
<path d="M1571.2,135 L1572.8,137.6 Q1573.6,139.4 1572.2,140.4" stroke-width="2.7"/>
</g>
<g fill="#3d4247" stroke="#3d4247" stroke-width="1" stroke-linejoin="round">
<path d="M1570,128.4 L1570.4,133 L1565.8,131.4 Z"/>
<path d="M1560.6,128 L1556.4,129.6 L1561.2,132.6 Z"/>
<path d="M1560.8,139.2 L1564.6,136.6 V141.6 Z"/>
</g>
<g fill="none" stroke="#e3e6e8" stroke-linejoin="round" stroke-linecap="round">
<path d="M1561,127.6 L1563.4,123.6 Q1564,122.6 1564.7,123.6 L1568.6,130.4" stroke-width="1"/>
<path d="M1556.8,140.2 Q1554,139.8 1555.2,137.4 L1559.6,130" stroke-width="1"/>
<path d="M1571.2,135 L1572.8,137.6 Q1573.6,139.4 1572.2,140.4" stroke-width=".8"/>
</g>
<g fill="#e3e6e8">
<path d="M1569.3,129.6 L1569.5,131.9 L1567.2,131.1 Z"/>
<path d="M1560,129.1 L1557.9,129.9 L1560.4,131.4 Z"/>
<path d="M1562.2,139.2 L1564,138 V140.4 Z"/>
</g>
</svg>

<div class="abs" style="left:814px;top:330px;width:196px;height:22px;background:#d3e0ea"></div>
<div class="abs" id="doctext" style="left:814px;top:331px;height:22px;line-height:22px;font-size:16px;color:#1c1c1c;white-space:nowrap;letter-spacing:-.45px">${LINKVAR.LINKVARIABLE}</div>
<div class="abs" style="left:1016px;top:330px;width:1px;height:22px;background:#111"></div>

<!-- PANEL -->
<div id="panel" class="abs"></div>
<div id="panel-shadow" class="abs"></div>
<svg class="abs" style="left:420px;top:410px" width="24" height="90" viewBox="420 410 24 90"><path d="M424,418 H425 C425,424 437,425 437,433 V474 C437,482 425,483 425,489 H424Z" fill="#25282d"/><path d="M432,449.4 L426,454.2 L432,459" fill="none" stroke="#fff" stroke-width="1"/></svg>
<div id="topbar" class="abs"></div>
<div id="side" class="abs"></div>

<svg class="abs" style="left:0;top:0" width="90" height="904" viewBox="0 0 90 904">
<defs>
<linearGradient id="lg2" gradientUnits="userSpaceOnUse" x1="-9" y1="0" x2="9" y2="0"><stop offset="0" stop-color="#2a0848"/><stop offset=".45" stop-color="#7a1638"/><stop offset="1" stop-color="#de3418"/></linearGradient>
<linearGradient id="wsh" x1="0" y1="0" x2="1" y2="0"><stop offset="0" stop-color="#fff"/><stop offset=".68" stop-color="#fff"/><stop offset="1" stop-color="#efefef"/></linearGradient>
</defs>
<!-- white top -->
<path d="M0,0H75V148L0,201Z" fill="url(#wsh)"/>
<!-- notch -->
<path d="M75,178 C75,184 72,188 66,188 H32.8 A32.3,32.3 0 0 0 32.8,252.6 H66 C72,252.6 75,257 75,263 Z" fill="#25282d"/>
<circle cx="37.8" cy="220.4" r="22.8" fill="#fff"/>
<!-- logo -->
<g transform="translate(37.25,43.3) rotate(-45) scale(1.06)" fill="none">
<path d="M8.7,-3 V7 A2,2 0 0 1 6.7,9 H-6.7 A2,2 0 0 1 -8.7,7 V4.9 A2,2 0 0 1 -6.7,2.9 H8.7" stroke="url(#lg2)" stroke-width="2.8" stroke-linejoin="miter"/>
<path d="M-8.7,3 V-7 A2,2 0 0 1 -6.7,-9 H6.7 A2,2 0 0 1 8.7,-7 V-4.6 A2,2 0 0 1 6.7,-2.6 H-8.7" stroke="#000" stroke-width="3.1" stroke-linejoin="miter"/>
</g>

<!-- active: art icon -->
<g fill="none" stroke="#0a0a0a" stroke-width="1.1" stroke-linecap="round" stroke-linejoin="round">
<path d="M28.6,226.6 C26.2,226.6 25.2,228.2 25.2,229.6 C25.2,231.4 26.6,232.4 28.2,232.4 H46.6 C48.4,232.4 49.6,231.2 49.6,229.8 C49.6,228.2 48.6,227.2 47.4,227 C46.6,223.2 43.6,220.2 39.8,220.2 C35.4,220.2 31.8,223 28.6,226.6 Z"/>
<path d="M32.8,228.6 C33.4,226.6 34.8,225.4 36.4,225.4 C38.6,225.4 40.4,227.4 42.4,228 C42.8,228.8 43,229.6 43,230.4"/>
<path d="M27.6,225.4 L25.8,222.4 L30.2,219.8 L32,222.8"/>
<path d="M34.4,220.6 C32.8,217.4 32.8,214 34.4,211 C36.4,213.8 37,217 36.2,220"/>
<path d="M35.2,214.6 L35.4,220.2"/>
<path d="M40.6,219.8 C40,217.6 40.2,215.6 41.4,213.8 C42.6,212 43.2,210.4 42.8,208.2 C45.2,210.6 45.6,213.6 44.2,216.2 C43.6,217.4 43.2,218.6 43.2,220.4"/>
<path d="M46.4,225.4 C44.8,222 45.6,218.2 49,215.4 C50.4,219 49.6,222.8 47.6,226.4"/>
<path d="M47.2,225.6 L48.6,218.2"/>
</g>
<g fill="none" stroke="#e6cdd6" stroke-opacity=".82" stroke-width="1.15" stroke-linejoin="round">
<!-- palette -->
<rect x="26.6" y="274.5" width="6.3" height="23" rx="1.1"/>
<path d="M26.6,279.4H32.9M26.6,284.4H32.9M26.6,289.4H32.9" stroke-width="1.5" stroke-opacity=".55"/>
<g transform="rotate(29 29.7 294.4)"><path d="M33.6,290 V276.2 Q33.6,274.2 31.6,274.2 H27.8 Q25.8,274.2 25.8,276.2 V283.4" /><path d="M25.8,280H33.6M25.8,285.4H33.6" stroke-opacity=".55"/></g>
<g transform="rotate(58 29.7 294.4)"><path d="M33.6,289 V276.2 Q33.6,274.2 31.6,274.2 H27.8 Q25.8,274.2 25.8,276.2 V284.4"/><path d="M25.8,280H33.6M25.8,285.4H33.6" stroke-opacity=".55"/></g>
<path d="M33,297.5 H48.8 Q49.9,297.5 49.9,296.4 V292.2 Q49.9,291.1 48.8,291.1 H43.4"/>
<path d="M39.4,292V297.5M44.6,291.1V297.5" stroke-opacity=".55"/>
<circle cx="29.7" cy="294.2" r=".9" fill="#e3c6d0" stroke="none"/>
<!-- molecule -->
<circle cx="46.3" cy="349" r="5"/>
<circle cx="30.8" cy="358.6" r="6.3"/>
<circle cx="34.4" cy="346.7" r="8.7" fill="#621732"/>
<circle cx="34.8" cy="347.2" r="2.9"/>
<path d="M45,347.6V350.4M47.6,347.6V350.4M45,349H47.6" stroke-width=".9"/>
<path d="M29.2,358V361.2M32,358V361.2M29.2,359.6H32" stroke-width=".9"/>
<!-- folder -->
<path d="M28.8,411.6 V409.8 Q28.8,408.6 30,408.6 H36.6 Q37.6,408.6 38,409.6 L38.8,411.6" stroke-width="1.4"/>
<rect x="28.8" y="411.6" width="18.6" height="11.8" rx="1.4" stroke-width="1.5"/>
<!-- gear -->
<path d="M34.66,473.72 L35.55,470.57 L40.25,470.57 L41.14,473.72 L42.24,474.36 L45.41,473.55 L47.76,477.62 L45.47,479.96 L45.47,481.24 L47.76,483.58 L45.41,487.65 L42.24,486.84 L41.14,487.48 L40.25,490.63 L35.55,490.63 L34.66,487.48 L33.56,486.84 L30.39,487.65 L28.04,483.58 L30.33,481.24 L30.33,479.96 L28.04,477.62 L30.39,473.55 L33.56,474.36Z" stroke-width="1.5"/>
<circle cx="37.9" cy="480.6" r="3.9" stroke-width="1.4"/>
<!-- network -->
<circle cx="37.9" cy="546.9" r="2.9" stroke-width="1.2"/>
<circle cx="37.9" cy="539.3" r="1.5"/><circle cx="31.5" cy="550.6" r="1.5"/><circle cx="44.4" cy="550.6" r="1.5"/>
<path d="M37.9,544V540.8M35.4,548.4L32.8,549.9M40.4,548.4L43.1,549.9"/>
<!-- head -->
<path d="M36,623 V618.4 H33.4 Q31.4,618.4 31.4,616.4 V613.8 L28.6,612.8 Q28.4,612.2 28.8,611.6 L30,609 Q29.2,598.8 38.6,598.8 A9.3,9.3 0 0 1 44,615.4 V623 Z" stroke-width="1.3"/>
<path d="M36.6,609.6 A2.6,2.6 0 1 1 40.4,609.6 L38.5,612.6 Z" stroke-width="1" />
<path d="M38.5,603.2V604.2M34.8,604.6L35.6,605.3M42.2,604.6L41.4,605.3M34,607.8H35M43,607.8H42" stroke-width=".9"/>
<!-- eye -->
<path d="M28.2,676 Q33,669.2 38,669.2 Q43,669.2 47.8,676 Q43,682.8 38,682.8 Q33,682.8 28.2,676 Z" stroke-width="1.4"/>
<path d="M35.6,678.4 A3.3,3.3 0 1 1 38.4,679.3" stroke-width="1.4"/>
</g>

</svg>
<div class="abs" style="left:0;top:0;width:75px;height:220px;"><div style="position:absolute;left:38px;top:111.5px;transform:translate(-50%,-50%) rotate(-90deg) scaleX(.93);font-size:14.6px;color:#585858;letter-spacing:.2px;white-space:nowrap" id="doclbl">DOCUMENT</div></div>


<div class="card" style="left:95px;top:78px;width:145px;height:98px"><div class="lbl" style="top:143px;margin-top:-78px">TEXT</div></div>
<div class="card" style="left:260px;top:78px;width:145px;height:98px"><div class="lbl" style="top:65px">CREATIVE BLOCK</div></div>
<div class="card" style="left:95px;top:196px;width:145px;height:88px"><div class="lbl" style="top:55px">HEADER</div></div>
<div class="card" style="left:260px;top:196px;width:145px;height:88px"><div class="lbl" style="top:55px">FOOTER</div></div>
<div class="card" style="left:95px;top:304px;width:145px;height:98px"><div class="lbl" style="top:65px">REPEATED BLOCK</div></div>
<div class="card" style="left:260px;top:304px;width:145px;height:98px"><div class="lbl" style="top:60px">DYNAMIC TABLE</div></div>
<div class="card" style="left:95px;top:422px;width:145px;height:116px"><div class="lbl" style="top:65px">TABLE OF<br>CONTENTS</div></div>
<div class="card" style="left:260px;top:422px;width:145px;height:116px"><div class="lbl" style="top:74px">STATIC TABLE</div></div>
<div class="card" style="left:95px;top:558px;width:310px;height:102px"><div class="lbl" style="top:70px;font-weight:bold;letter-spacing:0;-webkit-text-stroke:0">HTML</div></div>
<svg class="abs" style="left:0;top:0" width="440" height="904" viewBox="0 0 440 904">
<g fill="#b9b9b9">
<!-- Tt -->
<path d="M146.4,97.7H175V105H171.8V101.2H164.1V129.7H167.7V133.2H153.6V129.7H158V101.2H149.6V105H146.4Z"/>
<path d="M172.2,110.8H188.7V117H185.6V114H183V129.7H185.1V133.2H175.8V129.7H178.5V114H175.3V117H172.2Z"/>
</g>
<!-- highlighter -->
<g fill="none" stroke="#b9b9b9" stroke-width="3.7" stroke-linejoin="miter">
<path d="M336.6,100 L352.2,115.6 L342.6,125.2 L327,109.6Z"/>
<path d="M328.3,113.5 L323.4,118.4 L334.1,129.1 L339.5,123.7"/>
<path d="M324.2,121.8 L316,130.0"/>
<path d="M331.0,127.6 L327.2,131.4"/>
<path d="M310,131.8 H327.9" stroke-width="4.5"/>
</g>
<!-- header -->
<g fill="none" stroke="#bcbcbc" stroke-width="2.3">
<rect x="152.2" y="212.8" width="30.8" height="31" rx="5.5"/>
<rect x="156.1" y="218" width="22.9" height="6.9" rx="1"/>
<rect x="317" y="212.8" width="31" height="31" rx="5.5"/>
<rect x="320.9" y="232.2" width="23.1" height="6.8" rx="1"/>
</g>
<!-- repeated -->
<g fill="none" stroke="#b9b9b9" stroke-width="3.4">
<rect x="150.8" y="324.7" width="22" height="21.7"/>
<rect x="162.1" y="336.4" width="22" height="21.6"/>
</g>
<!-- dynamic table -->
<g fill="none" stroke="#b9b9b9" stroke-width="2.2" stroke-linejoin="round">
<path d="M341.8,341V327.5Q341.8,325 339.3,325H318.6Q316.1,325 316.1,327.5V350.4Q316.1,352.9 318.6,352.9H330"/>
<path d="M316.1,332.4H341.8" stroke-width="3"/>
<path d="M316.1,339.2H338M316.1,346.4H331M328.6,332.4V346.4"/>
<path d="M341.7,336.3 A4.9,4.9 0 0 1 348.7,343.3 L335.4,356.6 Q331.5,358.8 326.3,358.5 Q326.2,353.5 328.4,349.6 Z" fill="#b9b9b9" stroke="#33363b" stroke-width="2.6"/>
<path d="M341.7,336.3 A4.9,4.9 0 0 1 348.7,343.3 L335.4,356.6 Q331.5,358.8 326.3,358.5 Q326.2,353.5 328.4,349.6 Z" fill="#b9b9b9" stroke="none"/>
<circle cx="344.5" cy="340.5" r="2.2" fill="#33363b" stroke="none"/>
<path d="M338.5,343.3 L341.7,346.5 L334,354.1 L329.8,355.1 L330.1,351.7 Z" fill="#33363b" stroke="none"/>
</g>
<!-- TOC -->
<g fill="none" stroke="#b9b9b9">
<rect x="149" y="440.8" width="37.2" height="37.2" stroke-width="3.5"/>
<path d="M166,452.2H176.3M166,459.5H176.3M166,466.8H176.3" stroke-width="2.6"/>
</g>
<g fill="#b9b9b9"><circle cx="160.8" cy="452.2" r="2.1"/><circle cx="160.8" cy="459.5" r="2.1"/><circle cx="160.8" cy="466.8" r="2.1"/></g>
<!-- static table -->
<g fill="none" stroke="#b9b9b9" stroke-width="3">
<rect x="311.4" y="452.2" width="42.2" height="32.6" rx="1"/>
<path d="M325.7,452.2V484.8M339.3,452.2V484.8M311.4,462.9H353.6M311.4,474H353.6" stroke-width="2.6"/>
</g>
<!-- html -->
<path d="M225,578H275.1V618H225Z M229.9,587V612.8H270.3V587Z" fill="#b5b5b5" fill-rule="evenodd"/>
<g fill="none" stroke="#b5b5b5" stroke-width="1.7"><path d="M244.3,595.2 L237,600.2 L244.3,605.3"/><path d="M256,595.2 L263.3,600.2 L256,605.3"/><path d="M252.2,594.5 L248.2,606"/></g>
</svg>


<div class="abs tb-txt" id="doctitle" style="left:128px;top:24px;font-size:13px;line-height:18px;letter-spacing:-.58px;white-space:nowrap">VARIABLEDEMODOC</div>
<div class="box" style="left:440px;top:17px;width:150px;height:32px"></div>
<div class="abs tb-txt" id="fontname" style="left:440px;top:17px;width:150px;height:32px;line-height:31px;text-align:center;font-size:14px;letter-spacing:0">Open Sans</div>
<div class="abs" style="left:599px;top:17px;width:125px;height:32px;border:1px solid #cfcfcf"></div>
<div class="abs" style="left:636px;top:17px;width:2px;height:32px;background:#e8e8e8"></div>
<div class="abs" style="left:686px;top:17px;width:1px;height:32px;background:#cfcfcf"></div>
<div class="abs tb-txt" id="fsize" style="left:638px;top:17px;width:48px;height:32px;line-height:32px;text-align:center;font-size:17px">16</div>
<div class="gbox" style="left:984px;top:17px;width:92px;height:32px"></div>
<div class="gbox" style="left:1082px;top:17px;width:62px;height:32px"></div>
<div class="abs" style="left:1724px;top:12px;width:28px;height:16px;border-radius:8px;background:#b9252d"></div>
<div class="abs" style="left:1738px;top:14px;width:12px;height:12px;border-radius:6px;background:#fff"></div>
<div class="abs" style="left:1772px;top:12px;width:28px;height:16px;border-radius:8px;background:linear-gradient(90deg,#cfcfcf,#dddddd)"></div>
<div class="abs" style="left:1774px;top:14px;width:12px;height:12px;border-radius:6px;background:#fff;box-shadow:1px 1px 2px rgba(0,0,0,.25)"></div>
<div class="abs" id="rulerlbl" style="left:1724px;top:38px;font-size:14px;line-height:16px;color:#fff;white-space:nowrap;-webkit-text-stroke:.3px #fff">Ruler</div>
<div class="abs" id="readlbl" style="left:1772px;top:38px;font-size:14px;line-height:16px;color:#fff;white-space:nowrap;-webkit-text-stroke:.3px #fff">Read Mode</div>
<svg class="abs" style="left:0;top:0" width="1919" height="68" viewBox="0 0 1919 68">
<!-- pencil -->
<g fill="none" stroke="#8d8d8d" stroke-width="1.5" stroke-linejoin="round">
<path d="M296,40H312" stroke-width="1.6"/>
<path d="M298.6,37 L299.2,32.8 L307.4,24.6 L311,28.2 L302.8,36.4 Z"/>
</g>
<!-- undo -->
<path d="M338.8,25.2 L334.3,29.2 L338.8,33.2 M334.8,29.2 H346.2 A5,5 0 0 1 346.2,39.2 H341.4" fill="none" stroke="#b8b8b8" stroke-width="1.6"/>
<!-- redo -->
<path d="M379.3,25.2 L383.8,29.2 L379.3,33.2 M383.3,29.2 H371.9 A5,5 0 0 0 371.9,39.2 H376.7" fill="none" stroke="#59616a" stroke-width="1.6"/>
<!-- cloud -->
<g fill="none" stroke="#66717b" stroke-width="1.6" stroke-linecap="round" stroke-linejoin="round">
<path d="M413,28.2 A5.6,5.6 0 0 0 402.6,30.2 A4.9,4.9 0 0 0 404.2,39.8 H415.4 A4.7,4.7 0 0 0 417.5,31"/>
<path d="M405.8,33.6 L408.6,36.4 L416.4,28"/>
</g>
<!-- minus / plus -->
<path d="M611,33H625" stroke="#fff" stroke-width="2"/>
<path d="M699,33H711M705,27V39" stroke="#fff" stroke-width="2"/>

<defs>
<pattern id="hatch" width="3" height="3" patternUnits="userSpaceOnUse" patternTransform="rotate(-45)"><rect width="3" height="1.5" fill="#d0d0d0"/></pattern>
</defs>
<!-- text color A -->
<text x="758.9" y="34.4" font-family="Liberation Sans, sans-serif" font-weight="bold" font-size="17" fill="#fff" text-anchor="middle">A</text>
<rect x="750.5" y="37.3" width="17" height="2.4" rx="1.2" fill="#8b8b8b"/>
<!-- highlight A -->
<rect x="790" y="22" width="18" height="18" fill="url(#hatch)"/>
<text x="798.9" y="37.2" font-family="Liberation Sans, sans-serif" font-weight="bold" font-size="15.5" fill="#fff" stroke="#25282d" stroke-width="1.6" paint-order="stroke" text-anchor="middle">A</text>
<!-- B -->
<path d="M834,25.9 H839.6 A2.85,2.85 0 0 1 839.6,31.6 H834 M834,31.6 H840.5 A3.2,3.2 0 0 1 840.5,38 H834 V25.9" fill="none" stroke="#fff" stroke-width="2.5" stroke-linejoin="round" stroke-linecap="round"/>
<!-- I -->
<path d="M876,25.9 H884 M873.9,38.3 H881.9 M880.6,25.9 L877.4,38.3" fill="none" stroke="#fff" stroke-width="2.2" stroke-linecap="round"/>
<!-- U -->
<path d="M913.5,23.2 V31.6 A5.35,5.35 0 0 0 924.2,31.6 V23.2" fill="none" stroke="#fff" stroke-width="2"/>
<path d="M911.5,39.9H926.3" stroke="#c8c8c8" stroke-width="2"/>
<!-- link -->
<g fill="none" stroke="#fff" stroke-width="2.6" transform="translate(958.85,32.05) rotate(45)">
<rect x="-8.9" y="-3" width="9" height="6" rx="3"/>
<rect x="-0.1" y="-3" width="9" height="6" rx="3"/>
</g>
<!-- aA group -->
<g font-family="Liberation Sans, sans-serif" font-weight="bold" fill="#fff" stroke="#fff" stroke-width=".5">
<text x="988.6" y="39.4" font-size="14.6">a</text><text x="999.3" y="39.4" font-size="16.6">A</text>
<text x="1019" y="37.9" font-size="14.8" font-weight="normal" stroke-width=".7">a</text><text x="1029.2" y="37.9" font-size="17.3" font-weight="normal" stroke-width=".7">A</text>
<text x="1048.7" y="39.4" font-size="16.6">A</text><text x="1062.4" y="39.4" font-size="14.6">a</text>
</g>
<g fill="none" stroke="#fff" stroke-width="1.7"><path d="M992.6,29 Q995.8,25 999.8,26.6"/><path d="M1058.8,29 Q1062,25 1066,26.6"/></g>
<path d="M998.8,23.4 L1002.4,27.4 L997.4,29.2Z" fill="#fff"/><path d="M1065,23.4 L1068.6,27.4 L1063.6,29.2Z" fill="#fff"/>
<!-- X2 -->
<g stroke="#fff" stroke-width="2.6" fill="none"><path d="M1090,28.2 L1098,37.4 M1098,28.2 L1090,37.4"/><path d="M1119.9,28.2 L1127.9,37.4 M1127.9,28.2 L1119.9,37.4"/></g>
<text x="1101.6" y="31" font-family="Liberation Sans, sans-serif" font-size="9" fill="#fff" stroke="#fff" stroke-width=".3">2</text>
<text x="1131.4" y="40.7" font-family="Liberation Sans, sans-serif" font-size="9" fill="#fff" stroke="#fff" stroke-width=".3">2</text>
<!-- list -->
<g fill="#fff"><circle cx="1159.4" cy="26.6" r="1.8"/><circle cx="1159.4" cy="32.2" r="1.8"/><circle cx="1159.4" cy="37.8" r="1.8"/></g>
<path d="M1164,26.6H1172.4M1164,32.2H1172.4M1164,37.8H1172.4" stroke="#fff" stroke-width="1.5"/>
<!-- line height -->
<path d="M1192.6,26.4H1201M1192.6,32.2H1201M1192.6,38H1201" stroke="#fff" stroke-width="1.5"/>
<path d="M1206.2,25V39.2M1203.4,27.8L1206.2,24.8L1209,27.8M1203.4,36.6L1206.2,39.6L1209,36.6" fill="none" stroke="#fff" stroke-width="1.3"/>

<!-- sliders -->
<g stroke="#fff" stroke-width="1.3" fill="#fff">
<path d="M1863,25.7H1882.7M1863,33.5H1882.7M1863,41H1882.7"/>
<circle cx="1869.3" cy="25.7" r="1.9" stroke="none"/><circle cx="1876.7" cy="33.5" r="1.9" stroke="none"/><circle cx="1865" cy="41" r="1.9" stroke="none"/>
</g>
<path d="M1891.4,29.4 L1897.6,37.3 L1903.8,29.4" fill="none" stroke="#fff" stroke-width="1.3"/>
</svg>


<div class="abs" style="left:1840px;top:840px;width:60px;height:60px;border-radius:15px;background:#917df8"></div>
<svg class="abs" style="left:1840px;top:840px" width="60" height="60" viewBox="1840 840 60 60"><g fill="none" stroke="#fff" stroke-width="1.5"><circle cx="1870.5" cy="870.4" r="11.3"/><circle cx="1870.5" cy="870.4" r="5"/><path d="M1862.5,862.4L1867,866.9M1878.5,862.4L1874,866.9M1862.5,878.4L1867,873.9M1878.5,878.4L1874,873.9"/></g></svg>

</div>
</body>
</html>
